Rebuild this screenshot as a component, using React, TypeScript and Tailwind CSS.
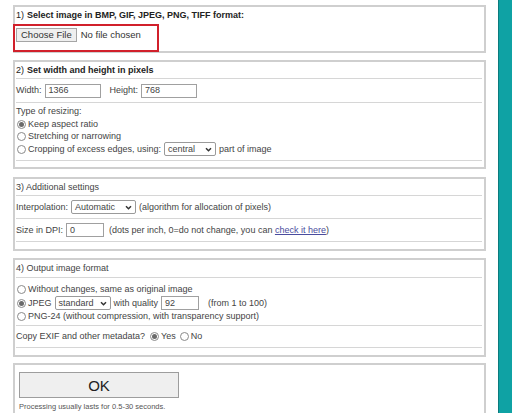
import React from "react";

function Radio({ checked = false }: { checked?: boolean }) {
  return (
    <span className="ml-[1px] mr-[2px] inline-flex h-[9px] w-[9px] shrink-0 items-center justify-center rounded-full border border-[#8a8a8a] bg-white">
      {checked && <span className="h-[5px] w-[5px] rounded-full bg-[#6a6a6a]" />}
    </span>
  );
}

function Select({ value, w }: { value: string; w: string }) {
  return (
    <span className={`mx-[3px] inline-flex h-[14px] items-center justify-between rounded-[2px] border border-[#9a9a9a] bg-white pl-[3px] pr-[3px] ${w}`}>
      <span>{value}</span>
      <svg width="7" height="5" viewBox="0 0 8 6">
        <path d="M1 1.5 L4 4.5 L7 1.5" stroke="#333" strokeWidth="1.8" fill="none" />
      </svg>
    </span>
  );
}

function Field({ value, w }: { value: string; w: string }) {
  return (
    <span className={`mx-[3px] inline-flex h-[14px] items-center border border-[#a0a0a0] bg-white px-[3px] ${w}`}>{value}</span>
  );
}

export default function App() {
  return (
    <div className="flex h-[413px] w-[512px] overflow-hidden bg-white font-['Liberation_Sans',Arial,sans-serif] text-[9px] leading-none text-[#444]">
      <div className="flex w-[498px] flex-col pl-[13px] pr-[12px] pt-[5px]">
        {/* 1 */}
        <div className="relative h-[48px] shrink-0 border-2 border-[#cfcfcf] pl-[1px]">
          <div className="flex h-[16px] items-center text-[#222]">
            1) <b className="ml-[3px]">Select image in BMP, GIF, JPEG, PNG, TIFF format:</b>
          </div>
          <div className="mt-[5px] flex items-center">
            <span className="flex h-[14px] items-center border border-[#a5a5a5] bg-[#efefef] px-[4px] text-[9.5px] text-[#333]">Choose File</span>
            <span className="ml-[4px] text-[9.5px] text-[#333]">No file chosen</span>
          </div>
          <div className="absolute left-[-2px] top-[17px] h-[28px] w-[146px] border-2 border-[#d1202b]" />
        </div>

        {/* 2 */}
        <div className="mt-[7px] h-[109px] shrink-0 border-2 border-[#cfcfcf] pl-[1px]">
          <div className="mr-[2px] flex h-[17px] items-center border-b border-[#d6d6d6] text-[#222]">
            2) <b className="ml-[3px]">Set width and height in pixels</b>
          </div>
          <div className="mr-[2px] flex h-[24px] items-center border-b border-[#d6d6d6]">
            Width:<Field value="1366" w="w-[56px]" />
            <span className="ml-[6px]">Height:</span>
            <Field value="768" w="w-[56px]" />
          </div>
          <div className="mr-[2px] flex h-[58px] flex-col border-b border-[#d6d6d6] pt-[4px]">
            <div className="h-[12px]">Type of resizing:</div>
            <div className="flex h-[11px] items-center">
              <Radio checked />Keep aspect ratio
            </div>
            <div className="flex h-[12px] items-center">
              <Radio />Stretching or narrowing
            </div>
            <div className="flex h-[14px] items-center">
              <Radio />Cropping of excess edges, using:
              <Select value="central" w="w-[52px]" />
              part of image
            </div>
          </div>
        </div>

        {/* 3 */}
        <div className="mt-[8px] h-[74px] shrink-0 border-2 border-[#cfcfcf] pl-[1px]">
          <div className="mr-[2px] flex h-[17px] items-center border-b border-[#d6d6d6]">3) Additional settings</div>
          <div className="mr-[2px] flex h-[23px] items-center border-b border-[#d6d6d6]">
            Interpolation:<Select value="Automatic" w="w-[65px]" />
            (algorithm for allocation of pixels)
          </div>
          <div className="mr-[2px] flex h-[23px] items-center border-b border-[#d6d6d6]">
            Size in DPI:<Field value="0" w="w-[38px]" />
            <span className="ml-[2px]">(dots per inch, 0=do not change, you can&nbsp;</span>
            <span className="text-[#4a4c9e] underline">check it here</span>)
          </div>
        </div>

        {/* 4 */}
        <div className="mt-[7px] h-[99px] shrink-0 border-2 border-[#cfcfcf] pl-[1px]">
          <div className="mr-[2px] flex h-[18px] items-center border-b border-[#d6d6d6]">4) Output image format</div>
          <div className="mr-[2px] flex h-[48px] flex-col border-b border-[#d6d6d6] pt-[6px]">
            <div className="flex h-[11px] items-center">
              <Radio />Without changes, same as original image
            </div>
            <div className="flex h-[16px] items-center">
              <Radio checked />JPEG
              <Select value="standard" w="w-[56px]" />
              with quality
              <Field value="92" w="w-[38px]" />
              <span className="ml-[6px]">(from 1 to 100)</span>
            </div>
            <div className="flex h-[11px] items-center">
              <Radio />PNG-24 (without compression, with transparency support)
            </div>
          </div>
          <div className="mr-[2px] flex h-[22px] items-center border-b border-[#d6d6d6]">
            Copy EXIF and other metadata?
            <span className="ml-[4px] flex items-center">
              <Radio checked />Yes
            </span>
            <span className="ml-[3px] flex items-center">
              <Radio />No
            </span>
          </div>
        </div>

        {/* 5 */}
        <div className="mt-[6px] h-[60px] shrink-0 border-2 border-[#cfcfcf] pl-[4px] pt-[7px]">
          <div className="flex h-[26px] w-[160px] items-center justify-center border border-[#9d9d9d] bg-[#efefef] text-[15px] text-[#222]">
            OK
          </div>
          <div className="mt-[5px] text-[7.5px] text-[#555]">Processing usually lasts for 0.5-30 seconds.</div>
        </div>
      </div>
      <div className="w-[14px] border-l border-[#0b7b7d] bg-[#0fa2a4]" />
    </div>
  );
}
